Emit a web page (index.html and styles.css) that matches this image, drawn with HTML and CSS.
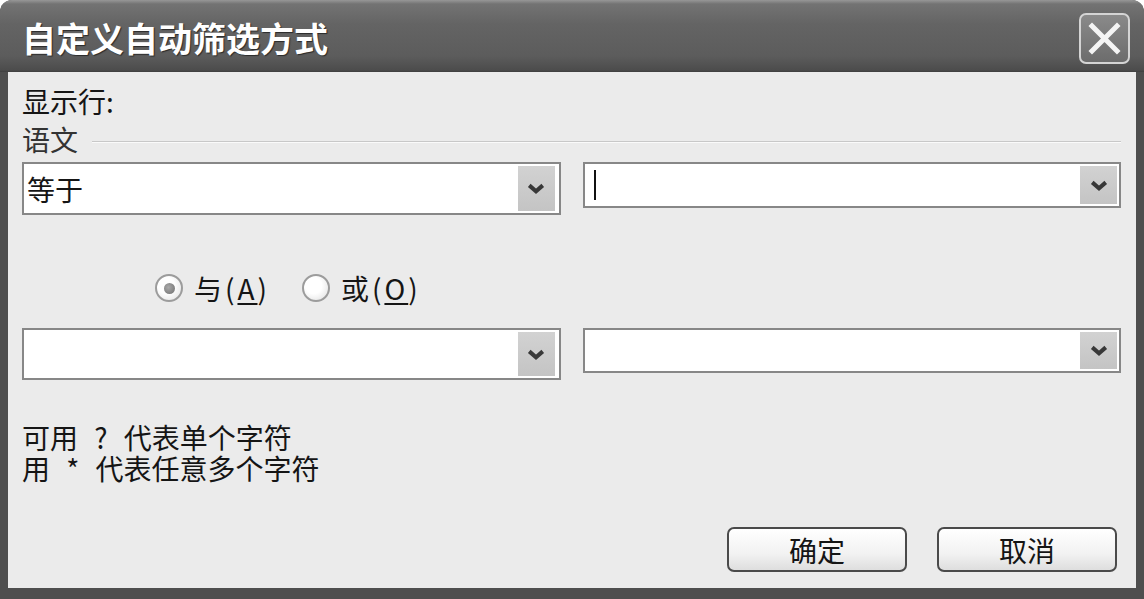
FILE: index.html
```html
<!DOCTYPE html>
<html lang="zh-CN">
<head>
    <meta charset="UTF-8">
    <title>自定义自动筛选方式</title>
    <link rel="stylesheet" href="styles.css">
</head>
<body>
    <div class="window">
        <div class="titlebar">
            <span class="title">自定义自动筛选方式</span>
            <button class="close" title="关闭">
                <svg viewBox="0 0 47 47" width="47" height="47">
                    <path d="M11 11 L36 36 M36 11 L11 36" stroke="#f4f4f4" stroke-width="5" stroke-linecap="square" fill="none"/>
                </svg>
            </button>
        </div>
        <div class="client">
            <div class="label">显示行:</div>
            <div class="group">
                <span>语文</span>
                <span class="rule"></span>
            </div>

            <div class="row">
                <div class="combo tall">
                    <span class="value">等于</span>
                    <span class="drop">
                        <svg viewBox="0 0 20 12" width="18" height="11"><path d="M2.5 2.5 L10 9 L17.5 2.5" stroke="#383838" stroke-width="4.5" fill="none"/></svg>
                    </span>
                </div>
                <div class="combo">
                    <span class="caret"></span>
                    <span class="drop">
                        <svg viewBox="0 0 20 12" width="18" height="11"><path d="M2.5 2.5 L10 9 L17.5 2.5" stroke="#383838" stroke-width="4.5" fill="none"/></svg>
                    </span>
                </div>
            </div>

            <div class="radios">
                <label class="radio checked"><span class="dot"></span><span class="text">与(<u>A</u>)</span></label>
                <label class="radio"><span class="dot"></span><span class="text">或(<u>O</u>)</span></label>
            </div>

            <div class="row">
                <div class="combo tall">
                    <span class="value"></span>
                    <span class="drop">
                        <svg viewBox="0 0 20 12" width="18" height="11"><path d="M2.5 2.5 L10 9 L17.5 2.5" stroke="#383838" stroke-width="4.5" fill="none"/></svg>
                    </span>
                </div>
                <div class="combo">
                    <span class="value"></span>
                    <span class="drop">
                        <svg viewBox="0 0 20 12" width="18" height="11"><path d="M2.5 2.5 L10 9 L17.5 2.5" stroke="#383838" stroke-width="4.5" fill="none"/></svg>
                    </span>
                </div>
            </div>

            <div class="hint">
                <div>可用 ? 代表单个字符</div>
                <div>用 * 代表任意多个字符</div>
            </div>

            <div class="buttons">
                <button class="btn">确定</button>
                <button class="btn">取消</button>
            </div>
        </div>
    </div>
</body>
</html>
```

FILE: styles.css
```css
body {
    margin: 0;
    background: #fff;
    font-family: "Noto Sans CJK SC", "Liberation Sans", sans-serif;
    color: #151515;
}

.window {
    width: 1144px;
    height: 599px;
    box-sizing: border-box;
    display: flex;
    flex-direction: column;
    background: #4e4e4e;
    border-radius: 12px 12px 0 0;
    overflow: hidden;
}

.titlebar {
    height: 72px;
    flex: none;
    display: flex;
    align-items: center;
    justify-content: space-between;
    box-sizing: border-box;
    padding: 2px 14px 0 22px;
    background: linear-gradient(#979797 0, #737373 4px, #646464 24px, #5c5c5c 56px, #4c4c4c 70px, #3e3e3e 72px);
}

.title {
    color: #fff;
    font-size: 34px;
    font-weight: bold;
    text-shadow: 1px 1px 1px #2a2a2a;
}

.close {
    width: 51px;
    height: 51px;
    padding: 0;
    margin-top: 2px;
    box-sizing: border-box;
    border: 2px solid #d4d4d4;
    border-radius: 7px;
    background: linear-gradient(#8a8a8a, #6c6c6c);
    display: flex;
    align-items: center;
    justify-content: center;
}

.client {
    flex: 1;
    margin: 0 8px 11px 8px;
    padding: 14px 15px 16px 14px;
    background: #ebebeb;
    display: flex;
    flex-direction: column;
    font-size: 28px;
}

.label {
    line-height: 30px;
}

.group {
    display: flex;
    align-items: center;
    height: 30px;
    margin-top: 8px;
    color: #333;
}

.group .rule {
    flex: 1;
    margin: 6px 0 0 14px;
    border-top: 1px solid #c8c8c8;
    border-bottom: 1px solid #fafafa;
}

.row {
    display: grid;
    grid-template-columns: 1fr 1fr;
    column-gap: 22px;
    align-items: start;
    margin-top: 8px;
}

.combo {
    height: 46px;
    box-sizing: border-box;
    border: 2px solid #878787;
    padding: 2px;
    background: #fff;
    display: flex;
    align-items: stretch;
}

.combo.tall {
    height: 53px;
    padding-right: 4px;
}

.combo .value {
    flex: 1;
    display: flex;
    align-items: center;
    padding-left: 1px;
}

.combo .caret {
    width: 2px;
    height: 30px;
    align-self: center;
    margin-left: 7px;
    background: #111;
}

.combo .caret + .drop {
    margin-left: auto;
}

.drop {
    width: 37px;
    background: linear-gradient(#d2d2d2, #c4c4c4);
    display: flex;
    align-items: center;
    justify-content: center;
}

.radios {
    display: flex;
    align-items: center;
    height: 30px;
    margin-top: 58px;
    padding-left: 133px;
    gap: 32px;
}

.radio {
    display: flex;
    align-items: center;
    gap: 11px;
}

.radio .text {
    letter-spacing: 3px;
}

.radio .dot {
    width: 28px;
    height: 28px;
    box-sizing: border-box;
    border-radius: 50%;
    border: 2px solid #9c9c9c;
    background: radial-gradient(circle at 40% 40%, #fff 40%, #dcdcdc);
    display: flex;
    align-items: center;
    justify-content: center;
}

.radio.checked .dot::after {
    content: "";
    width: 11px;
    height: 11px;
    border-radius: 50%;
    background: radial-gradient(circle at 40% 40%, #aaa, #6e6e6e);
}

.radio u {
    text-underline-offset: 3px;
}

.row + .radios + .row {
    margin-top: 25px;
}

.radios + .row .combo {
    height: 45px;
}

.radios + .row .combo.tall {
    height: 52px;
}

.hint {
    margin-top: 42px;
    line-height: 31px;
    word-spacing: 10px;
}

.buttons {
    margin-top: auto;
    margin-right: 4px;
    display: flex;
    justify-content: flex-end;
    gap: 30px;
}

.btn {
    width: 180px;
    height: 45px;
    border: 2px solid #4a4a4a;
    border-radius: 7px;
    background: linear-gradient(#ffffff, #f2f2f2 60%, #dedede);
    font-family: inherit;
    font-size: 28px;
    color: #151515;
    padding: 0;
}
```
